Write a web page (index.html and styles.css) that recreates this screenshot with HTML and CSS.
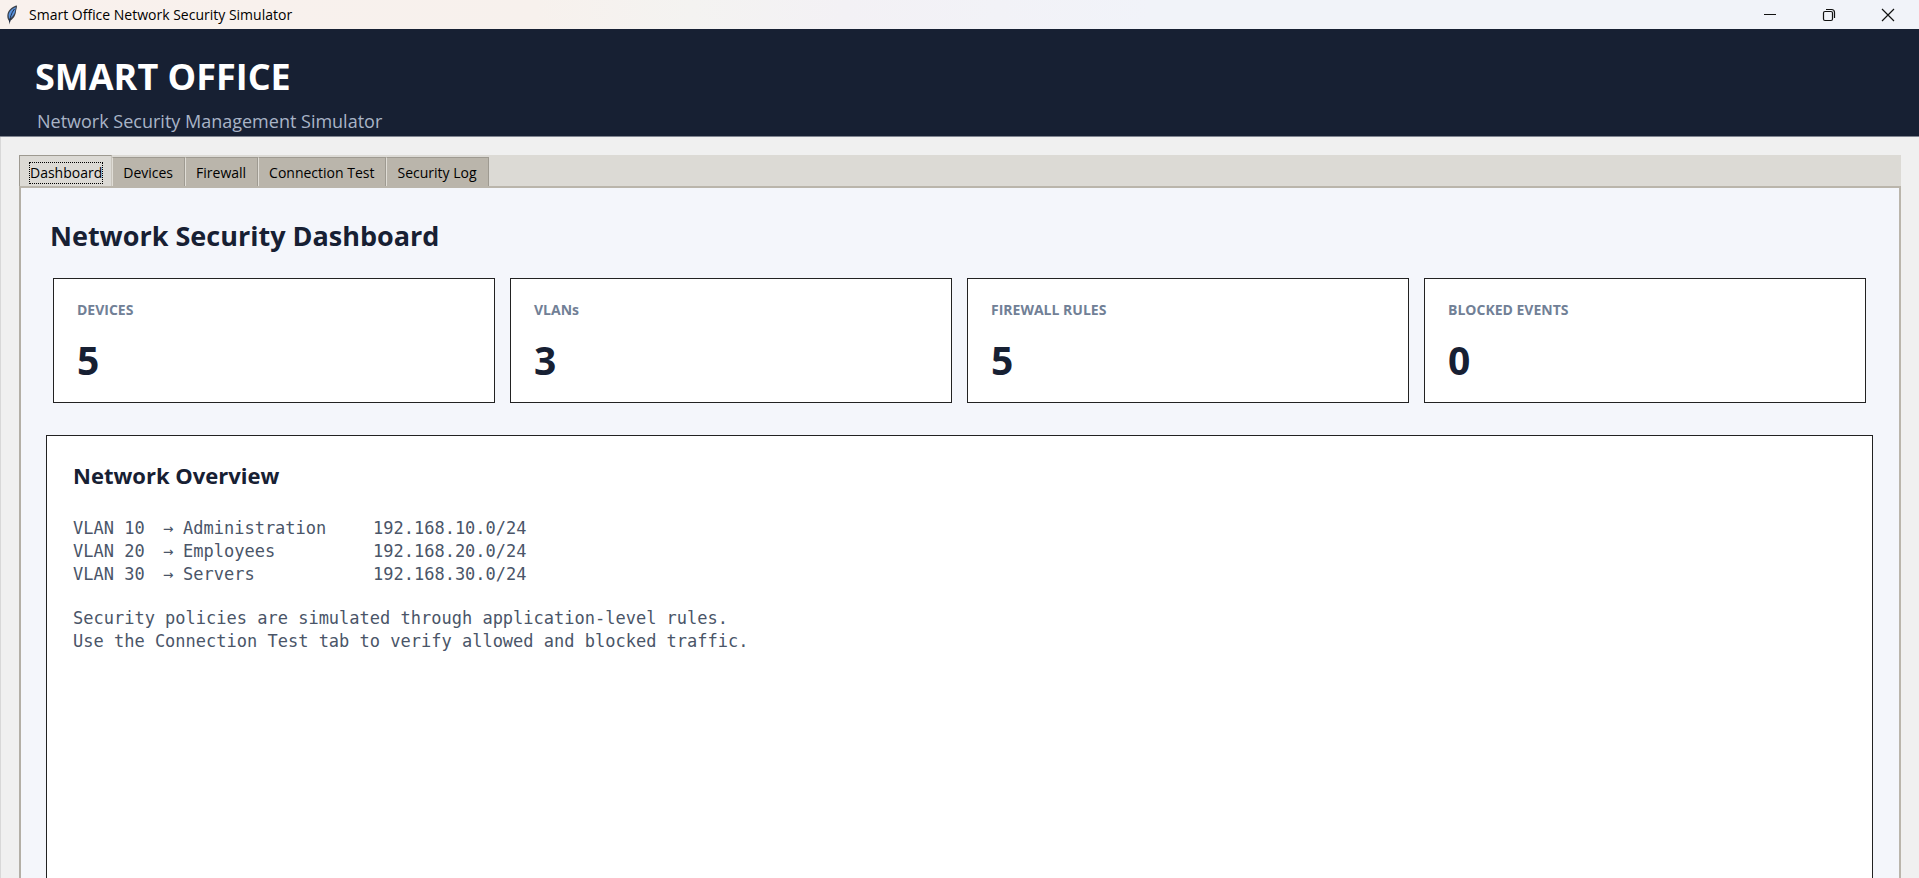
FILE: index.html
```html
<!DOCTYPE html>
<html lang="en">
<head>
    <meta charset="UTF-8">
    <meta name="viewport" content="width=device-width, initial-scale=1.0">
    <title>Smart Office Network Security Simulator</title>
    <link rel="stylesheet" href="styles.css">
</head>
<body>
    <div class="titlebar">
        <svg class="app-icon" width="12" height="20" viewBox="0 0 12 20" aria-hidden="true">
            <path d="M11 0.5 C7 1 2.500 4.500 1.500 9 C1 12 1.500 14 3 16 L3.500 19.500 L4.500 15.500 C8 13.500 10 9 10 6 C10.500 4 11 2.500 11 0.500 Z" fill="#3a3f49"/>
            <path d="M9.800 2 C6 3.500 3 6.500 2.600 10 L3 14 C6.500 12.500 9 8.500 9.200 5.500 Z" fill="#5a93dd"/>
            <path d="M8.500 4 C6.500 6.500 4.500 10 3.500 17" fill="none" stroke="#1b2a44" stroke-width="1"/>
        </svg>
        <span class="window-title">Smart Office Network Security Simulator</span>
        <div class="window-buttons">
            <button type="button" aria-label="Minimize">
                <svg width="14" height="14" viewBox="0 0 14 14"><path d="M1 6.500 H13" stroke="#111" fill="none"/></svg>
            </button>
            <button type="button" aria-label="Restore">
                <svg width="14" height="14" viewBox="0 0 14 14" fill="none" stroke="#111" stroke-width="1.200"><rect x="1.500" y="3.500" width="9" height="9" rx="1.500"/><path d="M4 1.500 H9.500 Q12.500 1.500 12.500 4.500 V10"/></svg>
            </button>
            <button type="button" aria-label="Close">
                <svg width="14" height="14" viewBox="0 0 14 14"><path d="M1 1 L13 13 M13 1 L1 13" stroke="#111" stroke-width="1.200" fill="none"/></svg>
            </button>
        </div>
    </div>

    <header class="header">
        <h1>SMART OFFICE</h1>
        <p>Network Security Management Simulator</p>
    </header>

    <main class="content">
        <div class="tabs" role="tablist">
            <button type="button" class="tab active" role="tab" aria-selected="true"><span>Dashboard</span></button>
            <button type="button" class="tab" role="tab" aria-selected="false"><span>Devices</span></button>
            <button type="button" class="tab" role="tab" aria-selected="false"><span>Firewall</span></button>
            <button type="button" class="tab" role="tab" aria-selected="false"><span>Connection Test</span></button>
            <button type="button" class="tab" role="tab" aria-selected="false"><span>Security Log</span></button>
        </div>

        <section class="panel" role="tabpanel">
            <h2>Network Security Dashboard</h2>

            <div class="cards">
                <div class="card">
                    <div class="card-title">DEVICES</div>
                    <div class="card-value">5</div>
                </div>
                <div class="card">
                    <div class="card-title">VLANs</div>
                    <div class="card-value">3</div>
                </div>
                <div class="card">
                    <div class="card-title">FIREWALL RULES</div>
                    <div class="card-value">5</div>
                </div>
                <div class="card">
                    <div class="card-title">BLOCKED EVENTS</div>
                    <div class="card-value">0</div>
                </div>
            </div>

            <div class="overview">
                <h3>Network Overview</h3>
                <table class="vlans">
                    <tr><td class="vlan-id">VLAN 10</td><td class="arrow">→</td><td class="vlan-name">Administration</td><td>192.168.10.0/24</td></tr>
                    <tr><td class="vlan-id">VLAN 20</td><td class="arrow">→</td><td class="vlan-name">Employees</td><td>192.168.20.0/24</td></tr>
                    <tr><td class="vlan-id">VLAN 30</td><td class="arrow">→</td><td class="vlan-name">Servers</td><td>192.168.30.0/24</td></tr>
                </table>
                <p>Security policies are simulated through application-level rules.<br>Use the Connection Test tab to verify allowed and blocked traffic.</p>
            </div>
        </section>
    </main>
</body>
</html>
```
FILE: styles.css
```css
* {
    box-sizing: border-box;
}
body {
    margin: 0;
    height: 100vh;
    display: flex;
    flex-direction: column;
    overflow: hidden;
    background-color: #f0f0f0;
    font-family: 'Open Sans', 'Noto Sans', sans-serif;
    color: #172033;
}
h1, h2, h3, p {
    margin: 0;
}

/* window title bar */
.titlebar {
    display: flex;
    align-items: center;
    height: 29px;
    padding: 0 2px 0 6px;
    background: linear-gradient(90deg, #f9f1ed 0%, #f7f1ed 28%, #f4f3f1 36%, #f3f1f5 44%, #f1f3f9 60%);
}
.window-title {
    margin-left: 11px;
    font-size: 14px;
    color: #000;
}
.window-buttons {
    display: flex;
    margin-left: auto;
}
.window-buttons button {
    display: flex;
    align-items: center;
    justify-content: center;
    width: 59px;
    height: 29px;
    padding: 0;
    border: none;
    background: none;
}

/* app header */
.header {
    height: 108px;
    padding: 24px 35px 0;
    background-color: #172033;
    border-bottom: 1px solid #7f8490;
}
.header h1 {
    font-size: 36px;
    line-height: 48px;
    color: white;
}
.header p {
    padding: 8px 2px 0;
    font-size: 18px;
    line-height: 24px;
    color: #a9b4c7;
}

/* notebook */
.content {
    flex: 1;
    display: flex;
    flex-direction: column;
    padding: 18px 18px 0;
    border-left: 1px solid #d8d8d8;
}
.tabs {
    display: flex;
    align-items: flex-end;
    height: 31px;
    background-color: #dcdad5;
}
.tab {
    height: 29px;
    padding: 1px 11px 0 10px;
    border: 1px solid #9e9a91;
    border-left-color: #e0ddd6;
    border-bottom: none;
    background-color: #bab5ab;
    font-family: 'Open Sans', 'Noto Sans', sans-serif;
    font-size: 14px;
    line-height: 20px;
    color: #000;
}
.tab.active {
    height: 31px;
    padding: 3px 8px 0 9px;
    border-color: #9e9a91;
    border-right-color: #c8c4bc;
    background-color: #dcdad5;
}
.tab.active span {
    display: block;
    border: 1px dotted #000;
}
.panel {
    flex: 1;
    display: flex;
    flex-direction: column;
    padding: 28px 26px 0 25px;
    border: 2px solid #bab5ab;
    border-left-color: #b3afa6;
    border-bottom: none;
    background-color: #f4f6fb;
}
.panel h2 {
    padding-left: 4px;
    font-size: 27px;
    line-height: 40px;
}

/* summary cards */
.cards {
    display: grid;
    grid-template-columns: repeat(4, 1fr);
    gap: 15px;
    padding: 22px 7px 32px;
}
.card {
    padding: 20px 23px 17px;
    border: 1px solid #222;
    background-color: white;
}
.card-title {
    font-size: 14px;
    line-height: 22px;
    font-weight: bold;
    color: #718096;
}
.card-value {
    padding-top: 14px;
    font-size: 39px;
    line-height: 50px;
    font-weight: bold;
}

/* network overview */
.overview {
    flex: 1;
    padding: 23px 26px;
    border: 1px solid #222;
    border-bottom: none;
    background-color: white;
}
.overview h3 {
    font-size: 22px;
    line-height: 32px;
}
.vlans {
    margin-top: 26px;
    border-collapse: collapse;
}
.vlans td, .overview p {
    padding: 0;
    font-family: 'DejaVu Sans Mono', 'Liberation Mono', monospace;
    font-size: 17px;
    line-height: 23px;
    color: #4a5568;
}
.vlan-id {
    width: 90px;
}
.arrow {
    width: 20px;
}
.vlan-name {
    width: 190px;
}
.overview p {
    margin-top: 21px;
}
```
